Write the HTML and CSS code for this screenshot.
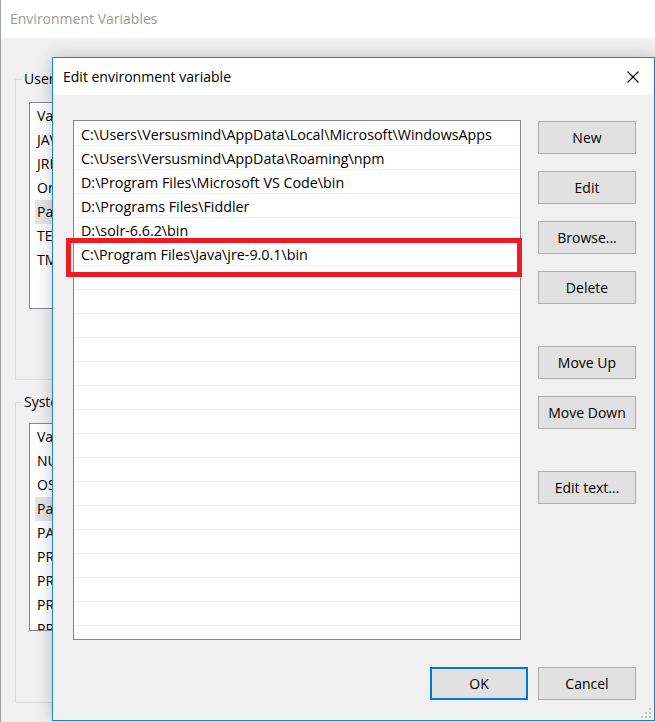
FILE: index.html
```html
<!DOCTYPE html>
<html lang="en">
<head>
<meta charset="utf-8">
<title>Edit environment variable</title>
<link rel="stylesheet" href="styles.css">
</head>
<body>
<div class="bgwin">
  <div class="bgtitle">Environment Variables</div>
  <div class="bgbody">
    <fieldset class="group user">
      <legend>User variables for Versusmind</legend>
      <div class="vlist ulist">
        <div class="vrow">Variable</div>
        <div class="vrow">JAVA_HOME</div>
        <div class="vrow">JRE_HOME</div>
        <div class="vrow">OneDrive</div>
        <div class="vrow sel">Path</div>
        <div class="vrow">TEMP</div>
        <div class="vrow">TMP</div>
      </div>
    </fieldset>
    <fieldset class="group sys">
      <legend>System variables</legend>
      <div class="vlist slist">
        <div class="vrow">Variable</div>
        <div class="vrow">NUMBER_OF_PROCESSORS</div>
        <div class="vrow">OS</div>
        <div class="vrow sel">Path</div>
        <div class="vrow">PATHEXT</div>
        <div class="vrow">PROCESSOR_ARCHITECTURE</div>
        <div class="vrow">PROCESSOR_IDENTIFIER</div>
        <div class="vrow">PROCESSOR_LEVEL</div>
        <div class="vrow">PROCESSOR_REVISION</div>
      </div>
    </fieldset>
  </div>
</div>

<div class="dialog">
  <div class="dtitle">
    <span class="dtitle-text">Edit environment variable</span>
    <svg class="close" width="12" height="12" viewBox="0 0 12 12" aria-label="Close">
      <path d="M0.5 0.5 L11.5 11.5 M11.5 0.5 L0.5 11.5" stroke="#000" stroke-width="1.1" fill="none"/>
    </svg>
  </div>
  <div class="dbody">
    <div class="main">
      <div class="pathlist">
        <div class="rows">
          <div class="prow">C:\Users\Versusmind\AppData\Local\Microsoft\WindowsApps</div>
          <div class="prow">C:\Users\Versusmind\AppData\Roaming\npm</div>
          <div class="prow">D:\Program Files\Microsoft VS Code\bin</div>
          <div class="prow">D:\Programs Files\Fiddler</div>
          <div class="prow">D:\solr-6.6.2\bin</div>
          <div class="prow">C:\Program Files\Java\jre-9.0.1\bin</div>
          <div class="prow"></div>
          <div class="prow"></div>
          <div class="prow"></div>
          <div class="prow"></div>
          <div class="prow"></div>
          <div class="prow"></div>
          <div class="prow"></div>
          <div class="prow"></div>
          <div class="prow"></div>
          <div class="prow"></div>
          <div class="prow"></div>
          <div class="prow"></div>
          <div class="prow"></div>
          <div class="prow"></div>
          <div class="prow"></div>
          <div class="prow"></div>
        </div>
        <div class="highlight"></div>
      </div>
      <div class="btncol">
        <button class="btn">New</button>
        <button class="btn">Edit</button>
        <button class="btn">Browse...</button>
        <button class="btn">Delete</button>
        <button class="btn gap">Move Up</button>
        <button class="btn">Move Down</button>
        <button class="btn gap">Edit text...</button>
      </div>
    </div>
    <div class="footer">
      <button class="btn ok">OK</button>
      <button class="btn">Cancel</button>
    </div>
  </div>
  <svg class="grip" width="12" height="12" viewBox="0 0 12 12" aria-hidden="true">
    <rect x="9" y="1" width="2" height="2" fill="#c0c0c0"/>
    <rect x="5" y="5" width="2" height="2" fill="#c0c0c0"/>
    <rect x="9" y="5" width="2" height="2" fill="#c0c0c0"/>
    <rect x="1" y="9" width="2" height="2" fill="#c0c0c0"/>
    <rect x="5" y="9" width="2" height="2" fill="#c0c0c0"/>
    <rect x="9" y="9" width="2" height="2" fill="#c0c0c0"/>
  </svg>
</div>
</body>
</html>
```

FILE: styles.css
```css
* {
  box-sizing: border-box;
}

html, body {
  margin: 0;
  padding: 0;
}

body {
  width: 655px;
  height: 722px;
  overflow: hidden;
  position: relative;
  background: #f0f0f0;
  font-family: "Open Sans", "Noto Sans", sans-serif;
  font-size: 14px;
  color: #000;
}

/* Background window, mostly hidden by the dialog */
.bgwin {
  width: 655px;
  height: 722px;
  border-left: 1px solid #a0a0a0;
  background: #f0f0f0;
}

.bgtitle {
  height: 38px;
  line-height: 38px;
  padding-left: 9px;
  background: #fff;
  color: #9a9a9a;
  font-size: 14px;
}

.bgbody {
  padding: 31px 0 0 14px;
}

.group {
  margin: 0;
  padding: 0;
  width: 620px;
  border: 1px solid #dcdcdc;
  min-width: 0;
}

.group legend {
  margin-left: 7px;
  padding: 0 1px;
  line-height: 20px;
  font-size: 14px;
}

.group.sys {
  margin-top: 12px;
}

.vlist {
  margin-left: 13px;
  width: 560px;
  background: #fff;
  border: 1px solid #828790;
  padding-top: 1px;
  overflow: hidden;
}

.ulist {
  margin-top: 13px;
  margin-bottom: 70px;
  height: 207px;
}

.slist {
  margin-top: 11px;
  margin-bottom: 71px;
  height: 208px;
}

.vrow {
  height: 24px;
  line-height: 24px;
  padding-left: 2px;
  margin-left: 5px;
  white-space: nowrap;
}

.vrow.sel {
  background: #e5e5e5;
}

/* Foreground dialog */
.dialog {
  position: absolute;
  left: 52px;
  top: 57px;
  width: 603px;
  height: 664px;
  border: 1px solid #1a82d9;
  background: #f0f0f0;
  box-shadow: 0 0 16px rgba(0, 0, 0, 0.22);
  display: flex;
  flex-direction: column;
}

.dtitle {
  height: 37px;
  background: #fff;
  display: flex;
  align-items: center;
  justify-content: space-between;
  padding: 0 15px 0 10px;
}

.dtitle-text {
  line-height: 20px;
  font-size: 14px;
}

.close {
  display: block;
}

.dbody {
  flex: 1;
  padding: 25px 18px 20px 20px;
  display: flex;
  flex-direction: column;
  justify-content: space-between;
}

.main {
  display: flex;
  gap: 17px;
  align-items: flex-start;
}

.pathlist {
  position: relative;
  width: 448px;
  height: 520px;
  border: 1px solid #828790;
  background: #fff;
  padding-top: 1px;
}

.rows {
  height: 100%;
  overflow: hidden;
}

.prow {
  height: 24px;
  margin-left: 1px;
  padding: 3px 0 0 6px;
  line-height: 20px;
  font-size: 14.3px;
  border-bottom: 1px solid #f0f0f0;
  white-space: nowrap;
}

.highlight {
  position: absolute;
  left: -8px;
  top: 117px;
  width: 456px;
  height: 39px;
  border: 5px solid #ed1c24;
}

.btncol {
  width: 98px;
  display: flex;
  flex-direction: column;
  gap: 17px;
  padding-top: 1px;
}

.btn {
  width: 98px;
  height: 33px;
  padding: 0;
  margin: 0;
  border: 1px solid #adadad;
  background: #e1e1e1;
  font-family: "Open Sans", "Noto Sans", sans-serif;
  font-size: 14px;
  color: #000;
  display: flex;
  align-items: center;
  justify-content: center;
}

.btn.gap {
  margin-top: 25px;
}

.footer {
  display: flex;
  justify-content: flex-end;
  gap: 10px;
}

.btn.ok {
  border: 2px solid #0078d7;
}

.grip {
  position: absolute;
  right: 2px;
  bottom: 1px;
}
```
